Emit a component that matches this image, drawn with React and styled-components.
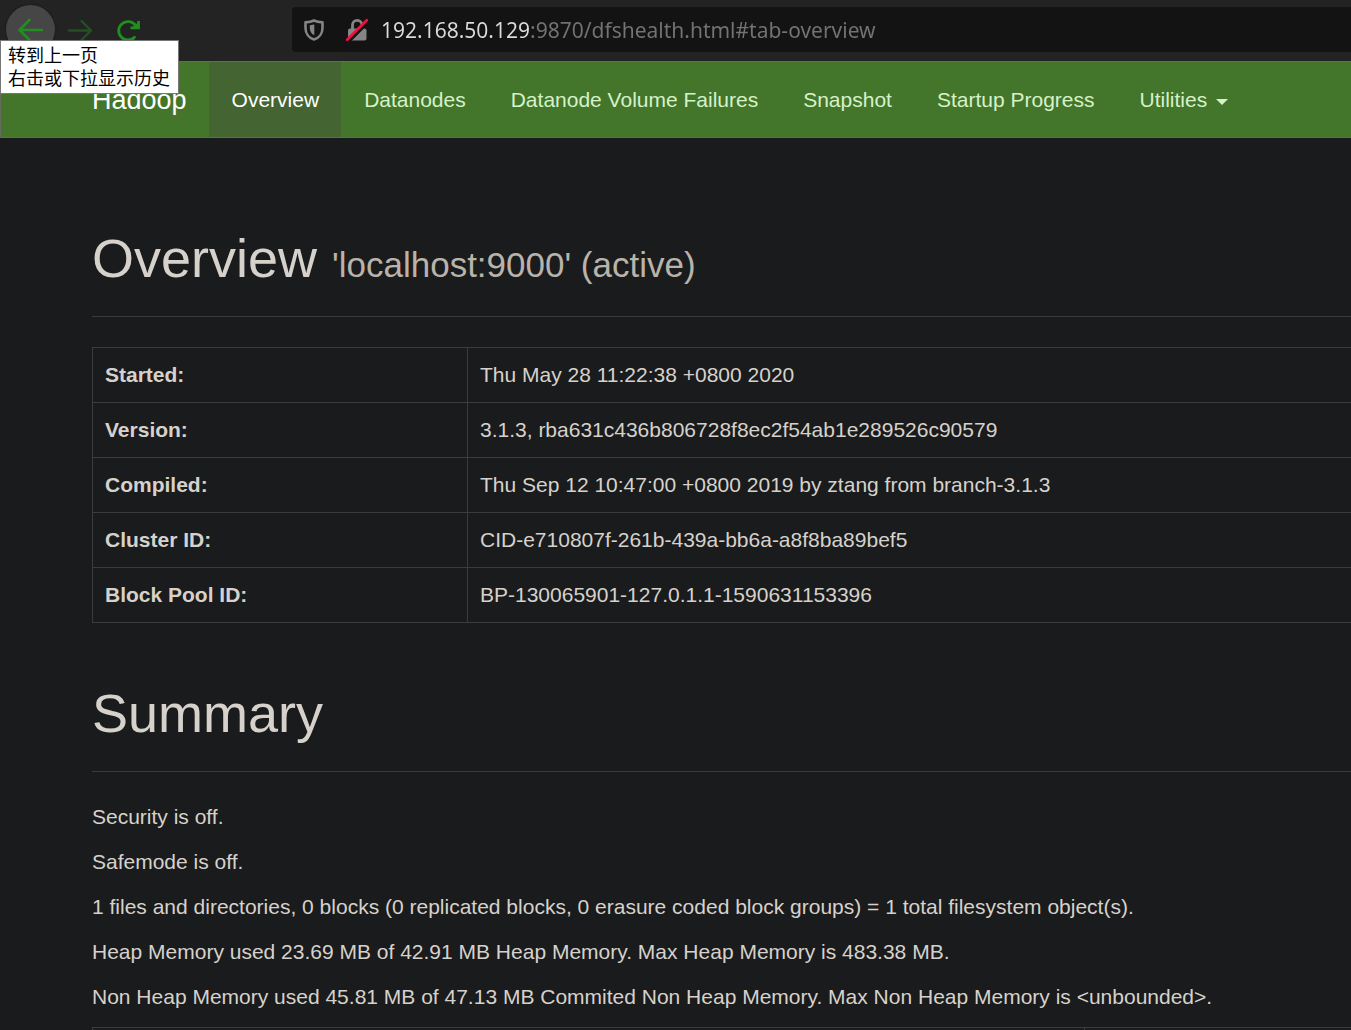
import React from "react";
import styled, { createGlobalStyle } from "styled-components";

const GlobalStyle = createGlobalStyle`
  * { box-sizing: border-box; }
  body {
    margin: 0;
    background: #1a1b1d;
    color: #d6d2cb;
    font-family: "Liberation Sans", Arial, sans-serif;
    font-size: 21px;
    line-height: 30px;
    overflow-x: hidden;
  }
`;

const Toolbar = styled.header`
  position: relative;
  display: flex;
  align-items: flex-start;
  height: 61px;
  padding-left: 6px;
  background: #232323;
`;

const Controls = styled.div`
  display: flex;
  flex: none;
  width: 286px;
  padding-top: 5px;
`;

const IconButton = styled.button`
  display: flex;
  align-items: center;
  justify-content: center;
  width: 49px;
  height: 49px;
  padding: 0;
  border: 0;
  border-radius: 50%;
  background: ${(p) => (p.$raised ? "#464646" : "transparent")};
  color: #208f20;
  box-shadow: ${(p) => (p.$raised ? "0 0 2px #111" : "none")};

  &:disabled { color: #225022; }
`;

const Tooltip = styled.div`
  position: absolute;
  z-index: 2;
  top: 40px;
  left: 0;
  padding: 2px 8px 4px 7px;
  border: 1px solid #767676;
  background: #fff;
  color: #000;
  font-family: "Noto Sans CJK SC", sans-serif;
  font-size: 18px;
  line-height: 23px;
  white-space: nowrap;
`;

const AddressBar = styled.form`
  display: flex;
  flex: 1;
  align-items: center;
  height: 45px;
  margin-top: 7px;
  padding-left: 12px;
  border-radius: 4px 0 0 4px;
  background: #131313;
`;

const SiteIcons = styled.div`
  display: flex;
  flex: none;
  align-items: center;
  gap: 21px;
  margin-right: 12px;
`;

const AddressInput = styled.input`
  flex: 1;
  min-width: 0;
  height: 34px;
  padding: 0;
  border: 0;
  outline: 0;
  background: linear-gradient(to right, #dcdcdc 149px, #737373 149px);
  background-clip: text;
  -webkit-background-clip: text;
  -webkit-text-fill-color: transparent;
  color: #dcdcdc;
  font-family: "Noto Sans", "Open Sans", sans-serif;
  font-size: 21px;
`;

const Navbar = styled.nav`
  display: flex;
  height: 77px;
  padding-left: 91px;
  border: 1px solid #66695f;
  border-right: 0;
  background: #43752b;
`;

const Brand = styled.a`
  padding: 23px 22px 0 0;
  color: #fff;
  font-size: 27px;
  text-decoration: none;
`;

const Tabs = styled.ul`
  display: flex;
  margin: 0;
  padding: 0;
  list-style: none;
`;

const TabLink = styled.a`
  display: flex;
  align-items: center;
  height: 75px;
  padding: 0 22px 0 23px;
  background: ${(p) => (p.$active ? "#446532" : "transparent")};
  color: ${(p) => (p.$active ? "#fff" : "#d5f2c9")};
  text-decoration: none;
  white-space: nowrap;
`;

const Caret = styled.span`
  margin: 4px 0 0 9px;
  border: 6px solid transparent;
  border-top-color: currentColor;
  border-bottom: 0;
`;

const Content = styled.main`
  padding: 30px 0 0 92px;
`;

const PageHeader = styled.div`
  padding: 61px 0 28px;
  margin-bottom: 30px;
  border-bottom: 1px solid #37393a;
`;

const Title = styled.h1`
  margin: 0;
  font-size: 54px;
  font-weight: 400;
  line-height: 59px;

  small {
    color: #b9b3a9;
    font-size: 35px;
    line-height: 1;
  }
`;

const DataTable = styled.table`
  width: 100%;
  border-collapse: separate;
  border-spacing: 0;
  table-layout: fixed;
  border-top: 1px solid #3a3c3d;
`;

const Cell = styled.td`
  height: ${(p) => (p.$bare ? "2px" : "55px")};
  padding: ${(p) => (p.$bare ? "0" : "0 12px")};
  border-left: 1px solid #3a3c3d;
  border-bottom: ${(p) => (p.$bare ? "0" : "1px solid #3a3c3d")};
  text-align: left;
`;

const Column = styled.col`
  width: ${(p) => p.$width};
`;

const Status = styled.p`
  margin: 0 0 15px;
`;

const tabs = ["Overview", "Datanodes", "Datanode Volume Failures", "Snapshot", "Startup Progress"];

const details = [
  ["Started:", "Thu May 28 11:22:38 +0800 2020"],
  ["Version:", "3.1.3, rba631c436b806728f8ec2f54ab1e289526c90579"],
  ["Compiled:", "Thu Sep 12 10:47:00 +0800 2019 by ztang from branch-3.1.3"],
  ["Cluster ID:", "CID-e710807f-261b-439a-bb6a-a8f8ba89bef5"],
  ["Block Pool ID:", "BP-130065901-127.0.1.1-1590631153396"],
];

const status = [
  "Security is off.",
  "Safemode is off.",
  "1 files and directories, 0 blocks (0 replicated blocks, 0 erasure coded block groups) = 1 total filesystem object(s).",
  "Heap Memory used 23.69 MB of 42.91 MB Heap Memory. Max Heap Memory is 483.38 MB.",
  "Non Heap Memory used 45.81 MB of 47.13 MB Commited Non Heap Memory. Max Non Heap Memory is <unbounded>.",
];

const stroke = { fill: "none", stroke: "currentColor", strokeLinecap: "round", strokeLinejoin: "round" };

const BackIcon = () => (
  <svg width="28" height="24" viewBox="0 0 28 24" {...stroke} strokeWidth="2.6">
    <path d="M25 12H2.500M12.500 2L2.500 12L12.500 22" />
  </svg>
);

const ForwardIcon = () => (
  <svg width="28" height="24" viewBox="0 0 28 24" {...stroke} strokeWidth="2.4">
    <path d="M3 12.500H25M15.500 3L25 12.500L15.500 22" />
  </svg>
);

const ReloadIcon = () => (
  <svg width="26" height="24" viewBox="0 0 26 24" {...stroke} strokeWidth="2.8">
    <path d="M18.500 19.200A9.200 9.200 0 1 1 19.800 8" />
    <path d="M22.500 3V9.800H14.500" strokeLinejoin="miter" strokeLinecap="butt" />
    <path d="M22.500 4L16 10H22.500Z" fill="currentColor" stroke="none" />
  </svg>
);

const ShieldIcon = () => (
  <svg width="20" height="22" viewBox="0 0 20 22" fill="none" stroke="#858585">
    <path d="M10 1.500C12.500 2.700 15.500 3.200 18.500 3.400V9C18.500 14.500 15 19 10 20.500C5 19 1.500 14.500 1.500 9V3.400C4.500 3.200 7.500 2.700 10 1.500Z" strokeWidth="2.600" strokeLinejoin="round" />
    <path d="M10.300 5.500V16.200C7.300 14.800 5.800 12 5.800 9V6.300Z" fill="#858585" stroke="none" />
  </svg>
);

const InsecureIcon = () => (
  <svg width="24" height="24" viewBox="0 0 24 24">
    <path d="M7.500 11V7A4.700 4.700 0 0 1 16.900 7V11" fill="none" stroke="#858585" strokeWidth="2.800" />
    <rect x="3" y="10.500" width="18.500" height="12" rx="2" fill="#858585" />
    <path d="M3.500 23.800L24 3.300" stroke="#131313" strokeWidth="3" />
    <path d="M2.200 21.800L21.800 2.200" stroke="#ff0a3c" strokeWidth="2.700" strokeLinecap="round" />
  </svg>
);

export default function App() {
  return (
    <>
      <GlobalStyle />
      <Toolbar>
        <Controls>
          <IconButton type="button" $raised aria-label="转到上一页" aria-describedby="back-tip"><BackIcon /></IconButton>
          <IconButton type="button" disabled aria-label="前进"><ForwardIcon /></IconButton>
          <IconButton type="button" aria-label="刷新"><ReloadIcon /></IconButton>
        </Controls>
        <AddressBar onSubmit={(e) => e.preventDefault()}>
          <SiteIcons>
            <ShieldIcon />
            <InsecureIcon />
          </SiteIcons>
          <AddressInput aria-label="地址" spellCheck="false" defaultValue="192.168.50.129:9870/dfshealth.html#tab-overview" />
        </AddressBar>
        <Tooltip id="back-tip" role="tooltip">
          <div>转到上一页</div>
          <div>右击或下拉显示历史</div>
        </Tooltip>
      </Toolbar>
      <Navbar>
        <Brand href="#">Hadoop</Brand>
        <Tabs>
          {tabs.map((tab, i) => (
            <li key={tab}><TabLink href="#" $active={i === 0}>{tab}</TabLink></li>
          ))}
          <li><TabLink href="#" aria-haspopup="menu">Utilities<Caret /></TabLink></li>
        </Tabs>
      </Navbar>
      <Content>
        <PageHeader>
          <Title>Overview <small>'localhost:9000' (active)</small></Title>
        </PageHeader>
        <DataTable>
          <colgroup><Column $width="375px" /><Column /></colgroup>
          <tbody>
            {details.map(([name, value]) => (
              <tr key={name}>
                <Cell as="th" scope="row">{name}</Cell>
                <Cell>{value}</Cell>
              </tr>
            ))}
          </tbody>
        </DataTable>
        <PageHeader>
          <Title>Summary</Title>
        </PageHeader>
        {status.map((line) => <Status key={line}>{line}</Status>)}
        <DataTable>
          <colgroup><Column $width="992px" /><Column /></colgroup>
          <tbody><tr><Cell $bare /><Cell $bare /></tr></tbody>
        </DataTable>
      </Content>
    </>
  );
}
